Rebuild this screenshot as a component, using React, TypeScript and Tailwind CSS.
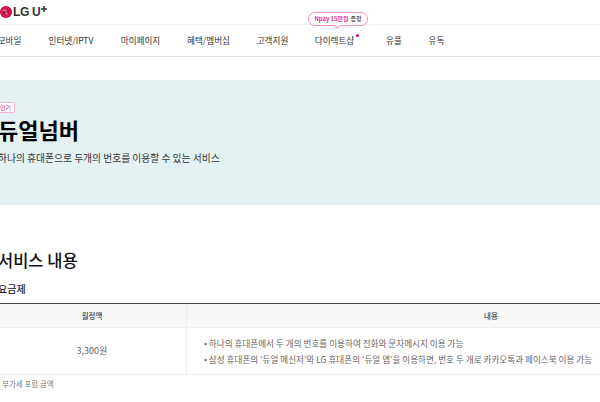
const font = { fontFamily: '"Noto Sans CJK KR", "Noto Sans", sans-serif' };

const navItems = [
  { label: '모바일', w: 'w-[23px]' },
  { label: '인터넷/IPTV', w: 'w-[46px]' },
  { label: '마이페이지', w: 'w-[39px]' },
  { label: '혜택/멤버십', w: 'w-[43px]' },
  { label: '고객지원', w: 'w-[31px]' },
  { label: '다이렉트샵', w: 'w-[39px]' },
  { label: '유플', w: 'w-[16px] ml-[5px]' },
  { label: '유독', w: 'w-[15px]' },
];

function Logo() {
  return (
    <div className="flex items-center h-[24px] ml-[2px]">
      <svg width="12" height="12" viewBox="0 0 24 24">
        <circle cx="12" cy="12" r="12" fill="#c5003d" />
        <circle cx="8" cy="8.5" r="1.4" fill="#fff" />
        <path d="M12 6v10h4" fill="none" stroke="#fff" strokeWidth="1.2" />
        <circle cx="12" cy="12" r="8.5" fill="none" stroke="#fff" strokeWidth="0.8" opacity="0.6" />
      </svg>
      <span className="ml-[1px] text-[12px] font-bold text-[#333] leading-none tracking-[-0.3px]" style={{ fontFamily: '"Liberation Sans", sans-serif' }}>
        LG U
      </span>
      <svg width="6" height="6" viewBox="0 0 6 6" className="ml-[1px] -mt-[7px]">
        <path d="M3 0v6M0 3h6" stroke="#333" strokeWidth="1.5" />
      </svg>
    </div>
  );
}

export default function App() {
  return (
    <div className="w-[600px] h-[402px] overflow-hidden bg-white" style={font}>
      <div className="w-[810px] -ml-[2px]">
        {/* Top bar */}
        <div className="h-[25px] border-b border-[#f2f2f2] flex items-center">
          <Logo />
        </div>

        {/* Nav */}
        <nav className="relative h-[32px] border-b border-[#e0e0e0] flex items-center gap-[27px]">
          {navItems.map(item => (
            <div key={item.label} className={`relative ${item.w} whitespace-nowrap text-[8.6px] text-[#333] leading-none flex justify-center`}>
              {item.label}
              {item.label === '다이렉트샵' && (
                <>
                  <span className="absolute -right-[5px] -top-[2px] w-[3px] h-[3px] rounded-full bg-[#e6007e]" />
                  <div className="absolute -top-[24px] left-[-7px] h-[14px] w-[60px] flex items-center justify-center rounded-full border border-[#f48fc0] bg-white text-[6px] font-medium">
                    <span className="text-[#e6007e]">Npay 15만원</span>
                    <span className="text-[#333] ml-[2px]">증정</span>
                    <span className="absolute left-[26px] -bottom-[3px] w-[5px] h-[5px] rotate-45 bg-white border-r border-b border-[#f48fc0]" />
                  </div>
                </>
              )}
            </div>
          ))}
        </nav>

        {/* Hero */}
        <section className="mt-[23px] h-[125px] bg-[#e4f2f4] pt-[22px]">
          <span className="flex w-[17px] items-center justify-end h-[11px] pr-[3px] border border-[#f9b4d6] bg-white rounded-[2px] text-[6px] text-[#e6007e] leading-none">
            인기
          </span>
          <h1 className="text-[22px] font-bold text-black leading-[30px] mt-[1px]">듀얼넘버</h1>
          <p className="text-[9.75px] text-[#333] leading-[14px] mt-[7px]">하나의 휴대폰으로 두개의 번호를 이용할 수 있는 서비스</p>
        </section>

        {/* Service info */}
        <section className="mt-[43px]">
          <h2 className="text-[16.5px] font-medium text-[#111] leading-[24px]">서비스 내용</h2>
          <h3 className="mt-[10px] text-[10px] font-medium text-[#222] leading-[14px]">요금제</h3>
          <div className="mt-[7px] border-t border-[#444]">
            <div className="flex h-[24px] bg-[#f8f8f8] border-b border-[#eee] text-[7.5px] font-medium text-[#444] items-center">
              <div className="w-[189px] text-center border-r border-[#eee] h-full flex items-center justify-center">월정액</div>
              <div className="w-[608px] text-center">내용</div>
            </div>
            <div className="flex h-[47px] border-b border-[#eee] text-[8.6px] text-[#666]">
              <div className="w-[189px] border-r border-[#eee] flex items-center justify-center text-[9px]">3,300원</div>
              <ul className="flex-1 pl-[17px] pt-[8px] leading-[15.5px] whitespace-nowrap">
                <li>• 하나의 휴대폰에서 두 개의 번호를 이용하여 전화와 문자메시지 이용 가능</li>
                <li>• 삼성 휴대폰의 ‘듀얼 메신저’와 LG 휴대폰의 ‘듀얼 앱’을 이용하면, 번호 두 개로 카카오톡과 페이스북 이용 가능</li>
              </ul>
            </div>
          </div>
          <p className="mt-[3px] pl-[4px] text-[7.5px] text-[#777] leading-[12px]">부가세 포함 금액</p>
        </section>
      </div>
    </div>
  );
}
